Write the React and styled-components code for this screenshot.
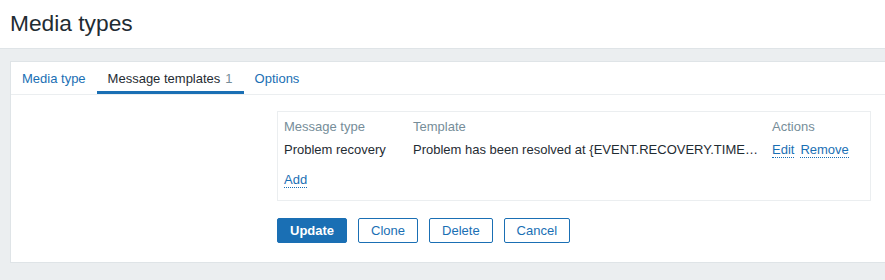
import React from "react";
import styled, { createGlobalStyle } from "styled-components";

const Global = createGlobalStyle`
  html, body { margin: 0; padding: 0; background: #ebeef0; }
  body { font-family: Arial, "Liberation Sans", sans-serif; font-size: 13px; color: #1f2c33; }
`;

const Header = styled.header`
  height: 48px;
  background: #ffffff;
  border-bottom: 1px solid #dfe4e7;
  display: flex;
  align-items: center;
  padding: 0 10px;
`;

const Title = styled.h1`
  margin: 0;
  font-size: 22.75px;
  font-weight: normal;
  color: #1f2c33;
  position: relative;
  top: -1px;
`;

const Main = styled.main`
  padding: 12px 0 0 10px;
`;

const Panel = styled.section`
  background: #ffffff;
  border: 1px solid #dfe4e7;
  border-right: none;
`;

const Tabs = styled.nav`
  display: flex;
  border-bottom: 1px solid #ebeef0;
  height: 32px;
`;

const Tab = styled.div`
  padding: 3px 11px 0 11px;
  display: flex;
  align-items: center;
  color: ${(p) => (p.$active ? "#1f2c33" : "#1a6fb4")};
  border-bottom: 3px solid ${(p) => (p.$active ? "#1a6fb4" : "transparent")};
`;

const Count = styled.span`
  color: #768d99;
  margin-left: 5px;
`;

const Body = styled.div`
  display: grid;
  grid-template-columns: 266px 594px;
  padding: 16px 0 19px;
`;

const Field = styled.div`
  grid-column: 2;
  display: flex;
  flex-direction: column;
  gap: 17px;
`;

const TableBox = styled.div`
  border: 1px solid #ebeef0;
  padding: 4px 0 13px;
`;

const Table = styled.table`
  width: 100%;
  border-collapse: collapse;
  table-layout: fixed;
`;

const Th = styled.th`
  box-sizing: border-box;
  text-align: left;
  font-weight: normal;
  color: #768d99;
  padding: 3px 6px 4px;
  width: ${(p) => p.$w || "auto"};
`;

const Td = styled.td`
  padding: 4px 6px 5px;
  white-space: nowrap;
  overflow: ${(p) => (p.$actions ? "visible" : "hidden")};
  text-overflow: ellipsis;
`;

const LinkText = styled.a`
  color: #1a6fb4;
  text-decoration: none;
  border-bottom: 1px dotted #1a6fb4;
  cursor: pointer;
  margin-right: ${(p) => (p.$gap ? "6px" : "0")};
`;

const AddRow = styled.div`
  padding: 10px 6px 0;
`;

const Buttons = styled.div`
  display: flex;
  gap: 11px;
`;

const Button = styled.button`
  height: 25px;
  padding: 0 12px;
  font-family: inherit;
  font-size: 13px;
  border-radius: 2px;
  border: 1px solid #1a6fb4;
  background: ${(p) => (p.$primary ? "#1a6fb4" : "#ffffff")};
  color: ${(p) => (p.$primary ? "#ffffff" : "#1a6fb4")};
  font-weight: ${(p) => (p.$primary ? "bold" : "normal")};
`;

export default function App() {
  return (
    <>
      <Global />
      <Header>
        <Title>Media types</Title>
      </Header>
      <Main>
        <Panel>
          <Tabs>
            <Tab>Media type</Tab>
            <Tab $active>
              Message templates<Count>1</Count>
            </Tab>
            <Tab>Options</Tab>
          </Tabs>
          <Body>
            <Field>
              <TableBox>
                <Table>
                  <thead>
                    <tr>
                      <Th $w="129px">Message type</Th>
                      <Th $w="359px">Template</Th>
                      <Th>Actions</Th>
                    </tr>
                  </thead>
                  <tbody>
                    <tr>
                      <Td>Problem recovery</Td>
                      <Td>Problem has been resolved at {"{EVENT.RECOVERY.TIME}"} on {"{EVENT.RECOVERY.DATE}"}</Td>
                      <Td $actions>
                        <LinkText $gap>Edit</LinkText>
                        <LinkText>Remove</LinkText>
                      </Td>
                    </tr>
                  </tbody>
                </Table>
                <AddRow>
                  <LinkText>Add</LinkText>
                </AddRow>
              </TableBox>
              <Buttons>
                <Button $primary>Update</Button>
                <Button>Clone</Button>
                <Button>Delete</Button>
                <Button>Cancel</Button>
              </Buttons>
            </Field>
          </Body>
        </Panel>
      </Main>
    </>
  );
}
